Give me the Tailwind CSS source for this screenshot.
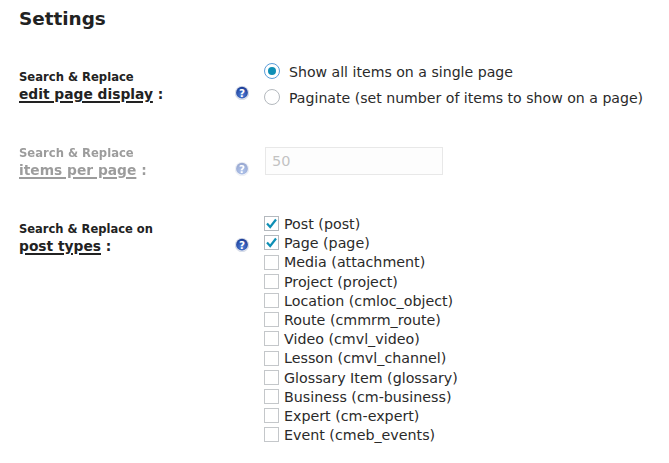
<!DOCTYPE html>
<html lang="en">
<head>
    <meta charset="UTF-8">
    <title>Settings</title>
    <script src="https://cdn.jsdelivr.net/npm/@tailwindcss/browser@4"></script>
</head>
<body class="bg-white w-[669px] h-[463px] overflow-hidden font-['DejaVu_Sans',sans-serif] text-[#222]">
    <!-- shared gradient for the help icons -->
    <svg class="absolute w-0 h-0">
        <defs>
            <radialGradient id="helpFill" cx="50%" cy="70%" r="70%">
                <stop offset="0" stop-color="#4f7fd8"/>
                <stop offset="1" stop-color="#1a3a94"/>
            </radialGradient>
        </defs>
    </svg>
    <div class="pl-[19px] pt-[8px]">
        <h2 class="text-[18.4px] leading-[22px] font-bold">Settings</h2>

        <div class="flex mt-[30px] h-[76px]">
            <div class="w-[216px] pt-[9px]">
                <div class="text-[11.6px] leading-[17px] font-bold">Search &amp; Replace</div>
                <div class="text-[13.8px] leading-[16px] font-bold"><span class="underline underline-offset-[2px] decoration-[1.5px]">edit page display</span> :</div>
            </div>
            <div class="w-[14px] pt-[26px] flex">
                <svg width="14" height="14" viewBox="0 0 14 14"><circle cx="7" cy="7" r="6.8" fill="#e4e8f2" stroke="#c3cbdc" stroke-width="0.6"/><circle cx="7" cy="6.7" r="5.9" fill="url(#helpFill)"/><text x="7" y="10.7" text-anchor="middle" font-size="10.5" font-weight="700" fill="#fff" font-family="DejaVu Sans">?</text></svg>
            </div>
            <div class="ml-[15px] pt-[1px] flex flex-col gap-[7px] text-[14.12px] leading-[19px] text-[#2a2a2a]">
                <label class="flex items-center gap-[9px]">
                    <span class="w-[16px] h-[16px] rounded-full border border-[#5b9dd9] flex items-center justify-center"><span class="w-[8px] h-[8px] rounded-full bg-[#0e8fb5]"></span></span>
                    <span class="relative top-[2px]">Show all items on a single page</span>
                </label>
                <label class="flex items-center gap-[9px]">
                    <span class="w-[16px] h-[16px] rounded-full border border-[#b4b9be] bg-white"></span>
                    <span class="relative top-[2px]">Paginate (set number of items to show on a page)</span>
                </label>
            </div>
        </div>

        <div class="flex h-[76px] opacity-45">
            <div class="w-[216px] pt-[9px]">
                <div class="text-[11.6px] leading-[17px] font-bold">Search &amp; Replace</div>
                <div class="text-[13.8px] leading-[16px] font-bold"><span class="underline underline-offset-[2px] decoration-[1.5px]">items per page</span> :</div>
            </div>
            <div class="w-[14px] pt-[26px] flex">
                <svg width="14" height="14" viewBox="0 0 14 14"><circle cx="7" cy="7" r="6.8" fill="#e4e8f2" stroke="#c3cbdc" stroke-width="0.6"/><circle cx="7" cy="6.7" r="5.9" fill="url(#helpFill)"/><text x="7" y="10.7" text-anchor="middle" font-size="10.5" font-weight="700" fill="#fff" font-family="DejaVu Sans">?</text></svg>
            </div>
            <div class="ml-[16px] pt-[11px]">
                <div class="w-[178px] h-[28px] border border-[#ccc] bg-[#fafafa] px-[6px] text-[14.5px] leading-[26px] text-[#777]">50</div>
            </div>
        </div>

        <div class="flex">
            <div class="w-[216px] pt-[9px]">
                <div class="text-[11.5px] leading-[17px] font-bold">Search &amp; Replace on</div>
                <div class="text-[13.8px] leading-[16px] font-bold"><span class="underline underline-offset-[2px] decoration-[1.5px]">post types</span> :</div>
            </div>
            <div class="w-[14px] pt-[26px] flex">
                <svg width="14" height="14" viewBox="0 0 14 14"><circle cx="7" cy="7" r="6.8" fill="#e4e8f2" stroke="#c3cbdc" stroke-width="0.6"/><circle cx="7" cy="6.7" r="5.9" fill="url(#helpFill)"/><text x="7" y="10.7" text-anchor="middle" font-size="10.5" font-weight="700" fill="#fff" font-family="DejaVu Sans">?</text></svg>
            </div>
            <div class="ml-[15px] pt-[2px] flex flex-col text-[14.25px] leading-[19.2px] text-[#2a2a2a]">
                <label class="flex items-center gap-[5px]"><span class="w-[15px] h-[15px] border border-[#b4b9be] flex items-center justify-center"><svg width="13" height="13" viewBox="0 0 13 13"><path d="M2 6.5 5.2 10 11 2.5" fill="none" stroke="#0e8fb5" stroke-width="2.2"/></svg></span><span class="relative top-[1px]">Post (post)</span></label>
                <label class="flex items-center gap-[5px]"><span class="w-[15px] h-[15px] border border-[#b4b9be] flex items-center justify-center"><svg width="13" height="13" viewBox="0 0 13 13"><path d="M2 6.5 5.2 10 11 2.5" fill="none" stroke="#0e8fb5" stroke-width="2.2"/></svg></span><span class="relative top-[1px]">Page (page)</span></label>
                <label class="flex items-center gap-[5px]"><span class="w-[15px] h-[15px] border border-[#c4c7ca]"></span><span class="relative top-[1px]">Media (attachment)</span></label>
                <label class="flex items-center gap-[5px]"><span class="w-[15px] h-[15px] border border-[#c4c7ca]"></span><span class="relative top-[1px]">Project (project)</span></label>
                <label class="flex items-center gap-[5px]"><span class="w-[15px] h-[15px] border border-[#c4c7ca]"></span><span class="relative top-[1px]">Location (cmloc_object)</span></label>
                <label class="flex items-center gap-[5px]"><span class="w-[15px] h-[15px] border border-[#c4c7ca]"></span><span class="relative top-[1px]">Route (cmmrm_route)</span></label>
                <label class="flex items-center gap-[5px]"><span class="w-[15px] h-[15px] border border-[#c4c7ca]"></span><span class="relative top-[1px]">Video (cmvl_video)</span></label>
                <label class="flex items-center gap-[5px]"><span class="w-[15px] h-[15px] border border-[#c4c7ca]"></span><span class="relative top-[1px]">Lesson (cmvl_channel)</span></label>
                <label class="flex items-center gap-[5px]"><span class="w-[15px] h-[15px] border border-[#c4c7ca]"></span><span class="relative top-[1px]">Glossary Item (glossary)</span></label>
                <label class="flex items-center gap-[5px]"><span class="w-[15px] h-[15px] border border-[#c4c7ca]"></span><span class="relative top-[1px]">Business (cm-business)</span></label>
                <label class="flex items-center gap-[5px]"><span class="w-[15px] h-[15px] border border-[#c4c7ca]"></span><span class="relative top-[1px]">Expert (cm-expert)</span></label>
                <label class="flex items-center gap-[5px]"><span class="w-[15px] h-[15px] border border-[#c4c7ca]"></span><span class="relative top-[1px]">Event (cmeb_events)</span></label>
            </div>
        </div>
    </div>
</body>
</html>
